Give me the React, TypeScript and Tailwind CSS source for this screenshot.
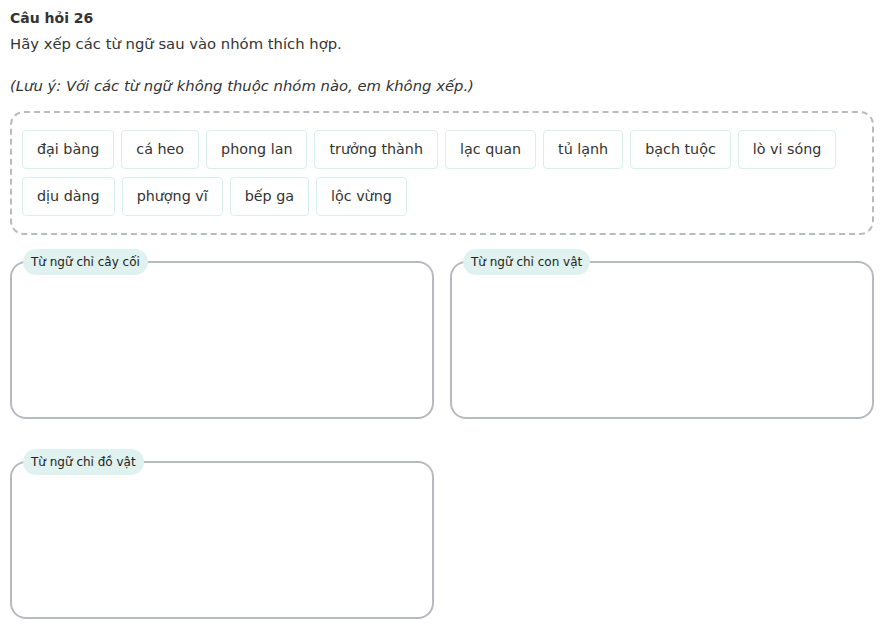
import React from 'react';

const WORDS = [
    'đại bàng', 'cá heo', 'phong lan', 'trưởng thành', 'lạc quan', 'tủ lạnh', 'bạch tuộc', 'lò vi sóng',
    'dịu dàng', 'phượng vĩ', 'bếp ga', 'lộc vừng',
];

const GROUPS = ['Từ ngữ chỉ cây cối', 'Từ ngữ chỉ con vật', 'Từ ngữ chỉ đồ vật'];

const DropZone: React.FC<{ label: string }> = ({ label }) => (
    <div className="relative pt-3">
        <div className="h-[158px] rounded-[16px] border-2 border-[#b7bac0] bg-white" />
        <span className="absolute left-[13px] top-0 h-[26px] px-2 flex items-center rounded-full bg-[#dff2f0] text-[12px] text-[#222]">
            {label}
        </span>
    </div>
);

export default function App() {
    return (
        <div className="w-[884px] h-[636px] bg-white px-[10px] pt-[8px] text-[#333]" style={{ fontFamily: '"DejaVu Sans", Verdana, sans-serif' }}>
            {/* Question */}
            <h1 className="text-[14px] font-bold leading-[20px]">Câu hỏi 26</h1>
            <p className="text-[14.8px] leading-[20px] mt-[6px]">Hãy xếp các từ ngữ sau vào nhóm thích hợp.</p>
            <p className="text-[14.8px] leading-[20px] italic mt-[22px]">(Lưu ý: Với các từ ngữ không thuộc nhóm nào, em không xếp.)</p>

            {/* Word bank */}
            <div className="mt-[15px] rounded-[14px] border-2 border-dashed border-[#b7bac0] px-[10px] pt-[17px] pb-[17px] flex flex-wrap gap-x-[7px] gap-y-[8px]">
                {WORDS.map(w => (
                    <span key={w} className="h-[39px] px-[14px] flex items-center rounded-[4px] border border-[#d8efec] bg-white text-[14.3px]">
                        {w}
                    </span>
                ))}
            </div>

            {/* Groups */}
            <div className="mt-[14px] grid grid-cols-2 gap-x-4 gap-y-[30px]">
                {GROUPS.map(g => (
                    <DropZone key={g} label={g} />
                ))}
            </div>
        </div>
    );
}
